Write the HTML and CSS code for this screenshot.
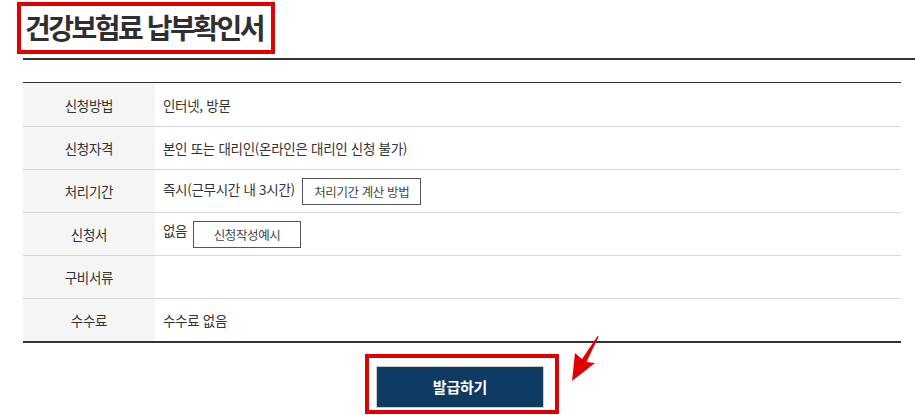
FILE: index.html
```html
<!DOCTYPE html>
<html lang="ko">
<head>
<meta charset="utf-8">
<title>건강보험료 납부확인서</title>
<link rel="stylesheet" href="styles.css">
</head>
<body>
<div class="page">
  <h1 class="title-box"><span class="title-text">건강보험료 납부확인서</span></h1>
  <div class="title-rule"></div>
  <table class="info">
    <tbody>
      <tr class="first">
        <th>신청방법</th>
        <td>인터넷, 방문</td>
      </tr>
      <tr>
        <th>신청자격</th>
        <td>본인 또는 대리인(온라인은 대리인 신청 불가)</td>
      </tr>
      <tr>
        <th>처리기간</th>
        <td>즉시(근무시간 내 3시간) <span class="btn-outline btn-wide">처리기간 계산 방법</span></td>
      </tr>
      <tr>
        <th>신청서</th>
        <td class="top">없음 <span class="btn-outline btn-narrow">신청작성예시</span></td>
      </tr>
      <tr>
        <th>구비서류</th>
        <td></td>
      </tr>
      <tr class="last">
        <th>수수료</th>
        <td>수수료 없음</td>
      </tr>
    </tbody>
  </table>
  <div class="actions">
    <div class="highlight">
      <button class="issue-btn" type="button">발급하기</button>
      <svg class="arrow" width="40" height="55" viewBox="0 0 40 55" aria-hidden="true">
        <polygon points="8,49 11,21 18,27 33.6,4 34.6,4.8 22.5,30 31,31" fill="#e00000"/>
      </svg>
    </div>
  </div>
</div>
</body>
</html>
```

FILE: styles.css
```css
* { box-sizing: border-box; }

html, body {
  margin: 0;
  padding: 0;
  background: #ffffff;
}

body {
  font-family: "Noto Sans CJK KR", "Noto Sans", sans-serif;
  color: #333333;
  width: 915px;
  height: 415px;
  overflow: hidden;
}

.page {
  padding: 0 14px 0 23px;
}

.title-box {
  display: block;
  width: fit-content;
  margin: 2px 0 0 -6px;
  padding: 0 8px 0 4px;
  border: 4px solid #e00000;
  height: 52px;
  line-height: 43px;
  font-size: 28px;
  font-weight: 700;
  letter-spacing: -2.5px;
  color: #2f2f2f;
}

.title-rule {
  height: 2px;
  margin: 4px -14px 0 0;
  background: #333333;
}

.info {
  width: 100%;
  margin-top: 22px;
  border-collapse: collapse;
  border-top: 1px solid #333333;
  border-bottom: 2px solid #333333;
  font-size: 13.5px;
  letter-spacing: -0.3px;
}

.info th,
.info td {
  height: 43px;
  border-bottom: 1px solid #d6d6d6;
  padding: 0;
  vertical-align: middle;
}

.info tr.first th,
.info tr.first td {
  height: 44px;
}

.info tr.last th,
.info tr.last td {
  border-bottom: none;
}

.info th {
  width: 132px;
  background: #f5f5f5;
  font-weight: 400;
  text-align: center;
  color: #333333;
}

.info td {
  padding-left: 8px;
  text-align: left;
}

.info td.top {
  padding-bottom: 4px;
}

.btn-outline {
  display: inline-flex;
  align-items: center;
  height: 27px;
  border: 1px solid #555555;
  font-size: 12.5px;
  letter-spacing: -0.4px;
  color: #444444;
  vertical-align: middle;
  background: #ffffff;
}

.btn-wide {
  padding: 0 11px;
  margin-left: 4px;
}

.btn-narrow {
  padding: 0 20px;
  margin-left: 2px;
  position: relative;
  top: 2px;
}

.actions {
  display: flex;
  justify-content: center;
  margin-top: 11px;
}

.highlight {
  position: relative;
  border: 4px solid #e00000;
  padding: 8px 11px 2px 7px;
}

.issue-btn {
  display: block;
  width: 168px;
  height: 42px;
  border: 1px solid #cfcfcf;
  background: #0f3a61;
  color: #ffffff;
  font-family: "Noto Sans CJK KR", "Noto Sans", sans-serif;
  font-size: 15px;
  font-weight: 700;
  letter-spacing: -0.2px;
  padding: 0;
}

.arrow {
  position: absolute;
  left: 195px;
  top: -26px;
}
```
